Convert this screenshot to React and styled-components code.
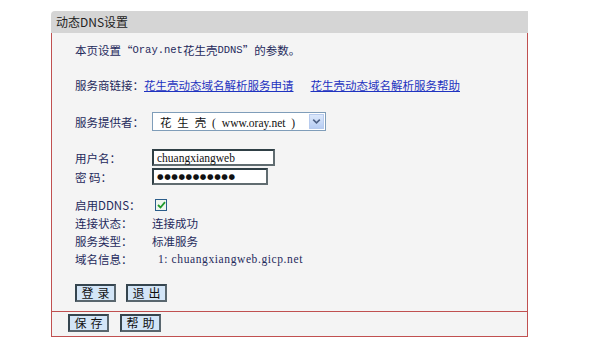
import React from "react";
import styled, { createGlobalStyle } from "styled-components";

const Global = createGlobalStyle`
  html, body { margin: 0; padding: 0; background: #ffffff; }
  body { font-family: "Noto Sans CJK SC", "Liberation Sans", sans-serif; font-size: 11.5px; color: #1f2a5c; }
`;

const Page = styled.div`
  padding: 11px 0 0 51px;
`;

const Panel = styled.div`
  width: 477px;
`;

const Header = styled.div`
  height: 22px;
  line-height: 22px;
  background: #d5d5d5;
  border-top-left-radius: 4px;
  padding-left: 5px;
  color: #222;
  font-size: 12px;
`;

const Body = styled.div`
  background: #f4f4f4;
  border: 1px solid #c05050;
  border-top: none;
`;

const Content = styled.div`
  display: flex;
  flex-direction: column;
  padding: 9px 0 9px 23px;
`;

const Line = styled.div`
  height: 16px;
  line-height: 16px;
  margin-top: ${(p) => p.$mt || 0}px;
  display: flex;
  align-items: center;
  white-space: nowrap;
`;

const Mixed = styled.span`
  font-family: "Liberation Mono", "Noto Sans CJK SC", monospace;
  font-size: 10.5px;
`;

const Link = styled.a`
  color: #1f33c0;
  text-decoration: underline;
  margin-right: ${(p) => p.$mr || 0}px;
  cursor: pointer;
`;

const Field = styled.div`
  display: grid;
  grid-template-columns: 77px auto;
  align-items: center;
  height: ${(p) => p.$h || 18}px;
  margin-top: ${(p) => p.$mt || 0}px;
  white-space: nowrap;
`;

const Select = styled.div`
  height: 17px;
  border: 1px solid #7f9db9;
  background: #fff;
  display: flex;
  align-items: center;
  justify-content: space-between;
  padding-left: 7px;
  box-sizing: content-box;
  width: 165px;
  color: #111;
`;

const SelectText = styled.span`
  font-family: "Liberation Serif", "Noto Sans CJK SC", serif;
  word-spacing: 3px;
  font-size: 11.5px;
`;

const SelectBtn = styled.span`
  width: 15px;
  height: 15px;
  margin-right: 1px;
  background: linear-gradient(#dce8fb, #b7cdf3);
  border: 1px solid #b7cbee;
  box-sizing: border-box;
  display: flex;
  align-items: center;
  justify-content: center;
`;

const Input = styled.div`
  width: ${(p) => p.$w}px;
  height: 17px;
  box-sizing: border-box;
  border: 2px solid #2f3f45;
  border-right-color: #606c70;
  border-bottom-color: #606c70;
  background: #fff;
  padding-left: 3px;
  display: flex;
  align-items: center;
  color: #111;
  font-family: "Liberation Serif", serif;
  font-size: 11.5px;
`;

const Dots = styled.span`
  font-size: 7.5px;
  letter-spacing: 0.6px;
  font-family: "DejaVu Sans", sans-serif;
`;

const Check = styled.span`
  width: 12px;
  height: 12px;
  margin-left: 3px;
  border: 1px solid #2b5d8a;
  background: #eef6ee;
  box-sizing: border-box;
  display: flex;
  align-items: center;
  justify-content: center;
`;

const Value = styled.span`
  padding-left: ${(p) => p.$pl || 0}px;
  font-family: ${(p) => (p.$serif ? '"Liberation Serif", "Noto Sans CJK SC", serif' : 'inherit')};
  letter-spacing: ${(p) => (p.$serif ? '0.6px' : 'normal')};
`;

const Buttons = styled.div`
  display: flex;
  gap: ${(p) => p.$gap}px;
  margin-top: ${(p) => p.$mt || 0}px;
`;

const Button = styled.button`
  width: 41px;
  height: 18px;
  padding: 0;
  margin: 0;
  background: #d3e5f7;
  border: 2px solid #35454f;
  border-right-color: #59666e;
  border-bottom-color: #59666e;
  color: #111;
  font-family: "Noto Sans CJK SC", sans-serif;
  font-size: 12px;
  line-height: 14px;
  letter-spacing: 4px;
  text-indent: 4px;
`;

const Footer = styled.div`
  border-top: 1px solid #c05050;
  padding: 2px 0 4px 16px;
`;

const Chevron = () => (
  <svg width="9" height="7" viewBox="0 0 9 7">
    <path d="M1.2 1.6 L4.5 4.8 L7.8 1.6" fill="none" stroke="#4d6185" strokeWidth="1.6" />
  </svg>
);

const Tick = () => (
  <svg width="9" height="8" viewBox="0 0 9 8">
    <path d="M1 4 L3.5 6.5 L8 1.2" fill="none" stroke="#1f9a2a" strokeWidth="1.8" />
  </svg>
);

export default function App() {
  return (
    <>
      <Global />
      <Page>
        <Panel>
          <Header>动态DNS设置</Header>
          <Body>
            <Content>
              <Line>
                本页设置“<Mixed>Oray.net</Mixed>花生壳<Mixed>DDNS</Mixed>”的参数。
              </Line>
              <Line $mt={19}>
                服务商链接：<Link $mr={17}>花生壳动态域名解析服务申请</Link>
                <Link>花生壳动态域名解析服务帮助</Link>
              </Line>
              <Field $h={19} $mt={19}>
                <span>服务提供者：</span>
                <Select>
                  <SelectText>花 生 壳 ( www.oray.net )</SelectText>
                  <SelectBtn>
                    <Chevron />
                  </SelectBtn>
                </Select>
              </Field>
              <Field $h={17} $mt={18}>
                <span>用户名：</span>
                <Input $w={123}>chuangxiangweb</Input>
              </Field>
              <Field $h={17} $mt={2}>
                <span>密 码：</span>
                <Input $w={116}>
                  <Dots>●●●●●●●●●●●</Dots>
                </Input>
              </Field>
              <Field $mt={11}>
                <span>启用DDNS：</span>
                <Check>
                  <Tick />
                </Check>
              </Field>
              <Field>
                <span>连接状态：</span>
                <Value>连接成功</Value>
              </Field>
              <Field>
                <span>服务类型：</span>
                <Value>标准服务</Value>
              </Field>
              <Field>
                <span>域名信息：</span>
                <Value $pl={6} $serif>1: chuangxiangweb.gicp.net</Value>
              </Field>
              <Buttons $gap={10} $mt={16}>
                <Button>登录</Button>
                <Button>退出</Button>
              </Buttons>
            </Content>
            <Footer>
              <Buttons $gap={11}>
                <Button>保存</Button>
                <Button>帮助</Button>
              </Buttons>
            </Footer>
          </Body>
        </Panel>
      </Page>
    </>
  );
}
